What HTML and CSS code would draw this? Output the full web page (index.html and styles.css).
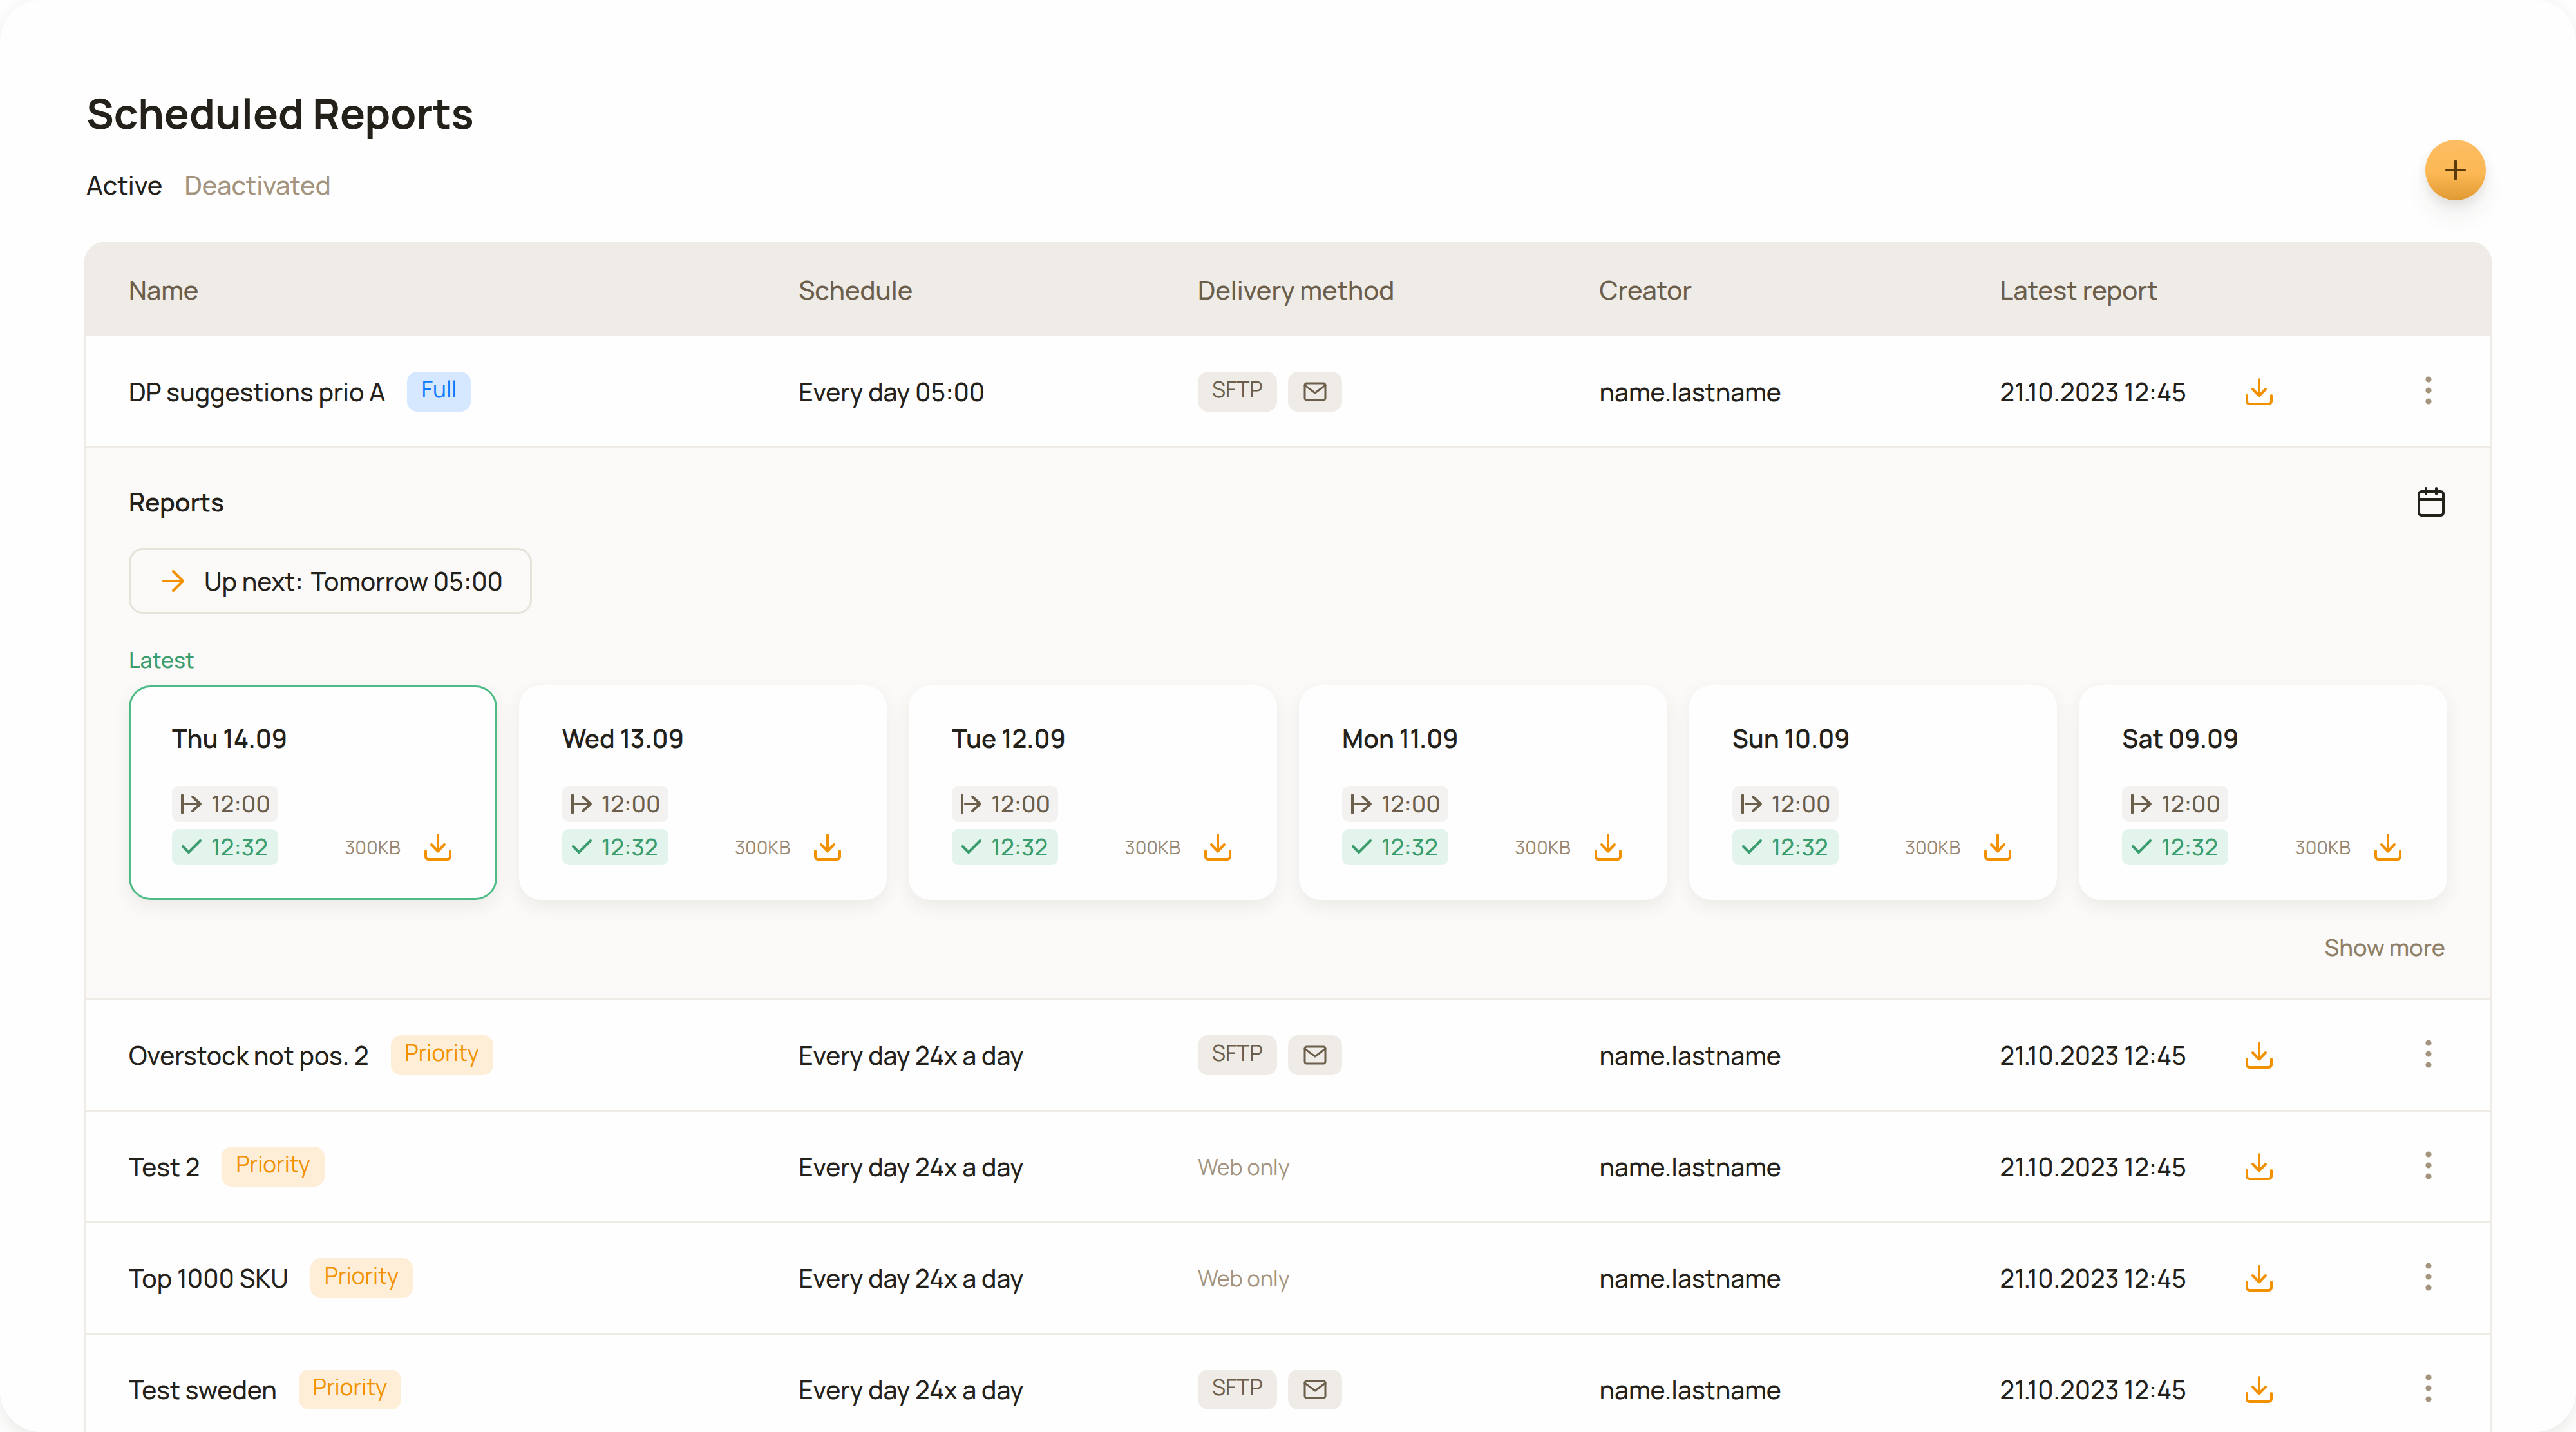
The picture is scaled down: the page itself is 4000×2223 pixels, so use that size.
FILE: index.html
```html
<!DOCTYPE html>
<html lang="en">
<head>
  <meta charset="utf-8">
  <title>Scheduled Reports</title>
  <link rel="stylesheet" href="styles.css">
</head>
<body>
  <svg class="sprite" aria-hidden="true">
    <symbol id="download" viewBox="0 0 44 44">
      <path d="M22 3v25M12 18l10 10.500 10-10.500M3 28v9a4 4 0 0 0 4 4h30a4 4 0 0 0 4-4v-9"/>
    </symbol>
    <symbol id="mail" viewBox="0 0 36 30">
      <rect x="2" y="2" width="32" height="26" rx="3"/>
      <path d="M2 5l16 12L34 5"/>
    </symbol>
    <symbol id="dots" viewBox="0 0 12 44">
      <circle cx="6" cy="5" r="4.600"/>
      <circle cx="6" cy="22" r="4.600"/>
      <circle cx="6" cy="39" r="4.600"/>
    </symbol>
    <symbol id="calendar" viewBox="0 0 44 48">
      <rect x="3" y="8" width="38" height="37" rx="4"/>
      <path d="M3 20h38M14 3v9M30 3v9"/>
    </symbol>
    <symbol id="arrow" viewBox="0 0 36 36">
      <path d="M3 18h29M18 3l15 15-15 15"/>
    </symbol>
    <symbol id="start" viewBox="0 0 34 34">
      <path d="M3 3v28M8 17h23M19 6l12 11-12 11"/>
    </symbol>
    <symbol id="check" viewBox="0 0 34 34">
      <path d="M4 16l9 9L31 7"/>
    </symbol>
    <symbol id="plus" viewBox="0 0 34 34">
      <path d="M17 3v28M3 17h28"/>
    </symbol>
  </svg>

  <main class="page">
    <header class="head">
      <div>
        <h1>Scheduled Reports</h1>
        <nav class="tabs">
          <a href="#active" class="current">Active</a>
          <a href="#deactivated">Deactivated</a>
        </nav>
      </div>
      <button class="add" aria-label="Add report"><svg class="icon small"><use href="#plus"/></svg></button>
    </header>

    <div class="panel">
      <table>
        <colgroup>
          <col class="col-name">
          <col class="col-schedule">
          <col class="col-delivery">
          <col class="col-creator">
          <col class="col-date">
          <col>
          <col>
        </colgroup>
        <thead>
          <tr>
            <th>Name</th>
            <th>Schedule</th>
            <th>Delivery method</th>
            <th>Creator</th>
            <th>Latest report</th>
            <th></th>
            <th></th>
          </tr>
        </thead>
        <tbody>
          <tr>
            <td><div class="group name">DP suggestions prio A <span class="tag full">Full</span></div></td>
            <td>Every day 05:00</td>
            <td><div class="group"><span class="tag">SFTP</span><span class="tag"><svg class="icon mail"><use href="#mail"/></svg></span></div></td>
            <td>name.lastname</td>
            <td>21.10.2023 12:45</td>
            <td><button class="download" aria-label="Download"><svg class="icon"><use href="#download"/></svg></button></td>
            <td class="menu"><button aria-label="More"><svg class="dots"><use href="#dots"/></svg></button></td>
          </tr>
          <tr>
            <td colspan="7" class="details">
              <div class="details-head">
                <h2>Reports</h2>
                <button aria-label="Calendar"><svg class="icon calendar"><use href="#calendar"/></svg></button>
              </div>
              <div class="next">
                <svg class="icon arrow"><use href="#arrow"/></svg>
                <span>Up next:</span>
                <span>Tomorrow 05:00</span>
              </div>
              <p class="latest">Latest</p>
              <div class="cards">
                <section class="card newest">
                  <h3>Thu 14.09</h3>
                  <span class="time"><svg class="icon small"><use href="#start"/></svg>12:00</span>
                  <div class="card-foot">
                    <span class="time done"><svg class="icon small"><use href="#check"/></svg>12:32</span>
                    <span class="size">300KB</span>
                    <button class="download" aria-label="Download"><svg class="icon"><use href="#download"/></svg></button>
                  </div>
                </section>
                <section class="card">
                  <h3>Wed 13.09</h3>
                  <span class="time"><svg class="icon small"><use href="#start"/></svg>12:00</span>
                  <div class="card-foot">
                    <span class="time done"><svg class="icon small"><use href="#check"/></svg>12:32</span>
                    <span class="size">300KB</span>
                    <button class="download" aria-label="Download"><svg class="icon"><use href="#download"/></svg></button>
                  </div>
                </section>
                <section class="card">
                  <h3>Tue 12.09</h3>
                  <span class="time"><svg class="icon small"><use href="#start"/></svg>12:00</span>
                  <div class="card-foot">
                    <span class="time done"><svg class="icon small"><use href="#check"/></svg>12:32</span>
                    <span class="size">300KB</span>
                    <button class="download" aria-label="Download"><svg class="icon"><use href="#download"/></svg></button>
                  </div>
                </section>
                <section class="card">
                  <h3>Mon 11.09</h3>
                  <span class="time"><svg class="icon small"><use href="#start"/></svg>12:00</span>
                  <div class="card-foot">
                    <span class="time done"><svg class="icon small"><use href="#check"/></svg>12:32</span>
                    <span class="size">300KB</span>
                    <button class="download" aria-label="Download"><svg class="icon"><use href="#download"/></svg></button>
                  </div>
                </section>
                <section class="card">
                  <h3>Sun 10.09</h3>
                  <span class="time"><svg class="icon small"><use href="#start"/></svg>12:00</span>
                  <div class="card-foot">
                    <span class="time done"><svg class="icon small"><use href="#check"/></svg>12:32</span>
                    <span class="size">300KB</span>
                    <button class="download" aria-label="Download"><svg class="icon"><use href="#download"/></svg></button>
                  </div>
                </section>
                <section class="card">
                  <h3>Sat 09.09</h3>
                  <span class="time"><svg class="icon small"><use href="#start"/></svg>12:00</span>
                  <div class="card-foot">
                    <span class="time done"><svg class="icon small"><use href="#check"/></svg>12:32</span>
                    <span class="size">300KB</span>
                    <button class="download" aria-label="Download"><svg class="icon"><use href="#download"/></svg></button>
                  </div>
                </section>
              </div>
              <div class="more"><button>Show more</button></div>
            </td>
          </tr>
          <tr>
            <td><div class="group name">Overstock not pos. 2 <span class="tag priority">Priority</span></div></td>
            <td>Every day 24x a day</td>
            <td><div class="group"><span class="tag">SFTP</span><span class="tag"><svg class="icon mail"><use href="#mail"/></svg></span></div></td>
            <td>name.lastname</td>
            <td>21.10.2023 12:45</td>
            <td><button class="download" aria-label="Download"><svg class="icon"><use href="#download"/></svg></button></td>
            <td class="menu"><button aria-label="More"><svg class="dots"><use href="#dots"/></svg></button></td>
          </tr>
          <tr>
            <td><div class="group name">Test 2 <span class="tag priority">Priority</span></div></td>
            <td>Every day 24x a day</td>
            <td class="web">Web only</td>
            <td>name.lastname</td>
            <td>21.10.2023 12:45</td>
            <td><button class="download" aria-label="Download"><svg class="icon"><use href="#download"/></svg></button></td>
            <td class="menu"><button aria-label="More"><svg class="dots"><use href="#dots"/></svg></button></td>
          </tr>
          <tr>
            <td><div class="group name">Top 1000 SKU <span class="tag priority">Priority</span></div></td>
            <td>Every day 24x a day</td>
            <td class="web">Web only</td>
            <td>name.lastname</td>
            <td>21.10.2023 12:45</td>
            <td><button class="download" aria-label="Download"><svg class="icon"><use href="#download"/></svg></button></td>
            <td class="menu"><button aria-label="More"><svg class="dots"><use href="#dots"/></svg></button></td>
          </tr>
          <tr>
            <td><div class="group name">Test sweden <span class="tag priority">Priority</span></div></td>
            <td>Every day 24x a day</td>
            <td><div class="group"><span class="tag">SFTP</span><span class="tag"><svg class="icon mail"><use href="#mail"/></svg></span></div></td>
            <td>name.lastname</td>
            <td>21.10.2023 12:45</td>
            <td><button class="download" aria-label="Download"><svg class="icon"><use href="#download"/></svg></button></td>
            <td class="menu"><button aria-label="More"><svg class="dots"><use href="#dots"/></svg></button></td>
          </tr>
        </tbody>
      </table>
    </div>
  </main>
</body>
</html>
```
FILE: styles.css
```css
* {
  box-sizing: border-box;
}
body {
  margin: 0;
  background: #fefefe;
  color: #23211a;
  font-family: Manrope, Inter, sans-serif;
  font-size: 39px;
  line-height: 52px;
  font-weight: 500;
}
h1,
h2,
h3,
p {
  margin: 0;
}
button {
  display: block;
  padding: 0;
  border: 0;
  background: none;
  color: inherit;
  font: inherit;
  cursor: pointer;
}
.sprite {
  position: absolute;
  width: 0;
  height: 0;
}
.icon {
  display: block;
  flex: none;
  width: 44px;
  height: 44px;
  fill: none;
  stroke: currentColor;
  stroke-width: 4;
  stroke-linecap: round;
  stroke-linejoin: round;
}
.small {
  width: 34px;
  height: 34px;
}
.page {
  height: 100vh;
  padding: 130px;
  overflow: hidden;
  border-radius: 64px;
  background: #fefefe;
  box-shadow: 0 8px 28px rgba(60, 50, 30, 0.1);
}

/* page head */
.head {
  display: flex;
  justify-content: space-between;
  padding: 0 10px 0 4px;
  margin-bottom: 62px;
}
h1 {
  margin-bottom: 40px;
  font-size: 65px;
  line-height: 91px;
  font-weight: 700;
}
.tabs {
  display: flex;
  gap: 34px;
}
.tabs a {
  color: #a4947e;
  font-size: 40px;
  text-decoration: none;
}
.tabs .current {
  color: #23211a;
}
.add {
  display: flex;
  align-items: center;
  justify-content: center;
  width: 94px;
  height: 94px;
  margin-top: 87px;
  border-radius: 50%;
  background: linear-gradient(#fdbd64, #fcb854 55%, #e09a33);
  color: #593a08;
  box-shadow: 0 8px 16px rgba(60, 50, 30, 0.1), 0 28px 36px rgba(60, 50, 30, 0.06);
}

/* table */
.panel {
  border: 3px solid #efebe6;
  border-bottom: 0;
  border-radius: 34px 34px 0 0;
  overflow: hidden;
}
table {
  width: 100%;
  table-layout: fixed;
  border-spacing: 0;
}
.col-name {
  width: 29.65%;
}
.col-schedule {
  width: 16.6%;
}
.col-delivery {
  width: 16.7%;
}
.col-creator {
  width: 16.66%;
}
.col-date {
  width: 10.2%;
}
th,
td {
  height: 173px;
  padding: 0;
  text-align: left;
}
th {
  height: 144px;
  background: #efebe6;
  color: #6b5e4b;
  font-size: 40px;
  font-weight: 500;
}
tr > :first-child {
  padding-left: 67px;
}
tr:first-child td {
  height: 171px;
}
tr + tr td {
  border-top: 3px solid #efebe6;
}
.group {
  display: flex;
  align-items: center;
  gap: 17px;
}
.name {
  gap: 34px;
}
.tag {
  display: flex;
  align-items: center;
  height: 62px;
  padding: 0 22px 8px;
  border-radius: 16px;
  background: #efebe6;
  color: #6b5e4b;
  font-size: 34px;
  font-weight: 400;
}
.mail {
  width: 36px;
  height: 30px;
  margin: 8px 2px 0;
  stroke-width: 3;
}
.full {
  background: #d6e8ff;
  color: #0a7aff;
}
.priority {
  background: #ffeed7;
  color: #f29100;
}
.full,
.priority {
  font-size: 35px;
}
.web {
  color: #a4947e;
  font-size: 34px;
  font-weight: 400;
}
.download {
  color: #f29100;
}
.menu button {
  margin: 0 90px 4px auto;
}
.dots {
  display: block;
  width: 12px;
  height: 44px;
  fill: #a4947e;
}

/* expanded row */
tr > .details {
  padding: 57px 67px 53px;
  background: #fbfaf8;
}
.details-head {
  display: flex;
  align-items: center;
  justify-content: space-between;
  margin-bottom: 46px;
  padding-right: 3px;
}
h2,
h3 {
  font-size: 39px;
  font-weight: 600;
}
.calendar {
  height: 48px;
}
.next {
  display: flex;
  align-items: center;
  gap: 12px;
  width: max-content;
  height: 102px;
  margin-bottom: 46px;
  padding: 0 42px 0 48px;
  border: 3px solid #e6e3da;
  border-radius: 22px;
}
.arrow {
  width: 36px;
  height: 36px;
  margin-right: 18px;
  color: #f29100;
}
.latest {
  margin-bottom: 15px;
  color: #3b9c6d;
  font-size: 34px;
  line-height: 50px;
}
.cards {
  display: grid;
  grid-template-columns: repeat(6, 1fr);
  gap: 34px;
}
.card {
  padding: 56px 67px 54px;
  border-radius: 34px;
  background: #fefefe;
  box-shadow: 0 10px 28px rgba(60, 50, 40, 0.08);
}
.newest {
  padding: 53px 64px 51px;
  border: 3px solid #4dbb86;
}
h3 {
  margin-bottom: 48px;
}
.time {
  display: flex;
  align-items: center;
  gap: 14px;
  width: 165px;
  height: 56px;
  padding-left: 13px;
  border-radius: 11px;
  background: #f4f2f0;
  color: #6b5e4b;
  font-size: 36px;
}
.done {
  background: #e2f4eb;
  color: #3b9c6d;
}
.card-foot {
  display: flex;
  align-items: center;
  gap: 36px;
  margin-top: 11px;
  padding-right: 3px;
}
.size {
  margin-left: auto;
  color: #978770;
  font-size: 29px;
  font-weight: 400;
}
.more {
  display: flex;
  justify-content: flex-end;
  margin-top: 48px;
  padding-right: 3px;
  color: #8f7f66;
  font-size: 36px;
}
```
